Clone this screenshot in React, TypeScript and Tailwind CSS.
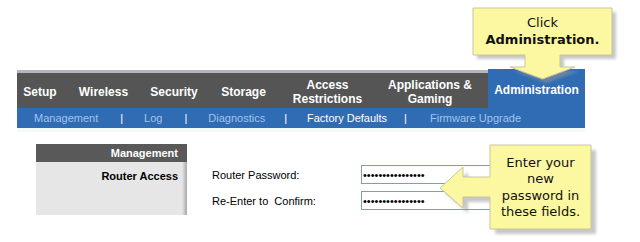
import React from 'react';

const tabs = [
  { label: 'Setup', w: 'w-[46px]' },
  { label: 'Wireless', w: 'w-[81px]' },
  { label: 'Security', w: 'w-[60px]' },
  { label: 'Storage', w: 'w-[79px]' },
  { label: 'Access\nRestrictions', w: 'w-[89px]' },
  { label: 'Applications &\nGaming', w: 'w-[116px]' },
];

const subItems = [
  { label: 'Management', cls: 'ml-[17px] text-[#a3c3ec]' },
  { label: '|', cls: 'ml-[22px] text-white' },
  { label: 'Log', cls: 'ml-[21px] text-[#a3c3ec]' },
  { label: '|', cls: 'ml-[22px] text-white' },
  { label: 'Diagnostics', cls: 'ml-[21px] text-[#a3c3ec]' },
  { label: '|', cls: 'ml-[19px] text-white' },
  { label: 'Factory Defaults', cls: 'ml-[20px] text-white' },
  { label: '|', cls: 'ml-[17px] text-white' },
  { label: 'Firmware Upgrade', cls: 'ml-[23px] text-[#a3c3ec]' },
];

const arial = { fontFamily: '"Liberation Sans", Arial, sans-serif' };
const verdana = { fontFamily: '"DejaVu Sans", Verdana, sans-serif' };

function Callouts() {
  const down = 'M473,8 H612 V55 H560 V67 H575 L542.5,79 L510,67 H525 V55 H473 Z';
  const left = 'M490,145 H591 V229 H490 V197 H463 V208 L440,188 L463,167 V177 H490 Z';
  return (
    <>
      <svg className="pointer-events-none absolute inset-0" width="640" height="242" viewBox="0 0 640 242">
        <defs>
          <filter id="soft" x="-10%" y="-10%" width="130%" height="130%">
            <feGaussianBlur stdDeviation="1.6" />
          </filter>
        </defs>
        <path d={down} transform="translate(4 4)" fill="#9a9a9a" opacity="0.55" filter="url(#soft)" />
        <path d={left} transform="translate(5 5)" fill="#9a9a9a" opacity="0.55" filter="url(#soft)" />
        <path d={down} fill="#fcf8a2" stroke="#c9c59c" strokeWidth="1" />
        <path d={left} fill="#fcf8a2" stroke="#c9c59c" strokeWidth="1" />
      </svg>

      <div className="absolute left-[473px] top-[14px] w-[139px] text-center text-[13px] leading-[17px] text-[#111]" style={verdana}>
        <div>Click</div>
        <div className="font-bold">Administration.</div>
      </div>

      <div className="absolute left-[490px] top-[155px] w-[101px] text-center text-[13px] leading-[16.3px] text-[#111]" style={verdana}>
        <div>Enter your</div>
        <div>new</div>
        <div>password in</div>
        <div>these fields.</div>
      </div>
    </>
  );
}

export default function App() {
  return (
    <div className="relative h-[242px] w-[640px] overflow-hidden bg-white" style={arial}>
      <div className="h-[70px]" />

      {/* Main tabs */}
      <div className="ml-[17px] flex h-[38px] w-[568px]">
        <div className="flex border-t-[3px] border-[#b6b6be] bg-[#555555]">
          {tabs.map(t => (
            <div
              key={t.label}
              className={`${t.w} flex items-center justify-center whitespace-pre pt-[3px] text-center text-[12px] font-bold leading-[14px] text-white`}
            >
              {t.label}
            </div>
          ))}
        </div>
        <div className="-mt-px flex w-[97px] items-center justify-center bg-[#2f6cb4] pt-[3px] text-[12px] font-bold text-white">
          Administration
        </div>
      </div>

      {/* Sub navigation */}
      <div className="ml-[17px] flex h-[20px] w-[568px] items-center bg-[#2f6cb4] text-[11px]">
        {subItems.map((s, i) => (
          <span key={i} className={`${s.cls} whitespace-nowrap`}>{s.label}</span>
        ))}
      </div>
      <div className="ml-[17px] h-[4px] w-[568px] bg-[#f4fafc]" />

      {/* Content */}
      <div className="mt-[12px] flex">
        <div className="ml-[36px] w-[151px]">
          <div className="flex h-[18px] items-center justify-end bg-[#595959] pr-[9px] text-[11px] font-bold text-white">
            Management
          </div>
          <div className="flex h-[53px] bg-[#e6e6e6]">
            <div className="flex-1 pr-[4px] pt-[6px] text-right text-[11px] font-bold text-black">Router Access</div>
            <div className="w-[5px] bg-gradient-to-r from-[#e6e6e6] to-[#a8a8a8]" />
          </div>
        </div>

        <div className="ml-[25px] flex flex-col gap-[7px] pt-[21px]">
          {['Router Password:', 'Re-Enter to  Confirm:'].map(l => (
            <div key={l} className="flex h-[19px] items-center">
              <span className="w-[149px] whitespace-pre pt-[2px] text-[11px] text-black">{l}</span>
              <input
                type="password"
                readOnly
                value="xxxxxxxxxxxxxxxx"
                className="h-[19px] w-[140px] border border-[#7f9db9] bg-white px-[1px] text-[11px] text-black outline-none"
                style={arial}
              />
            </div>
          ))}
        </div>
      </div>

      <Callouts />
    </div>
  );
}
